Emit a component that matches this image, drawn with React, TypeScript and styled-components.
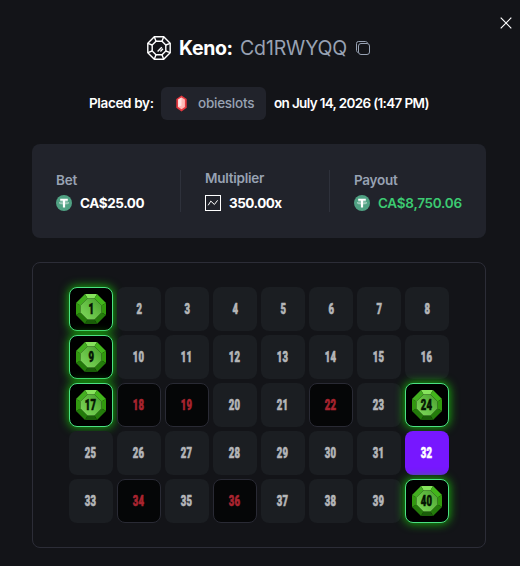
import styled, { createGlobalStyle, css } from "styled-components";

const GlobalStyle = createGlobalStyle`
  * {
    box-sizing: border-box;
  }
  body {
    margin: 0;
    background-color: #131418;
    font-family: Inter, "Liberation Sans", sans-serif;
  }
`;

const Modal = styled.div`
  position: relative;
  width: 520px;
  height: 566px;
  padding: 34px 34px 18px 32px;
  background-color: #131418;
  color: #ffffff;
  overflow: hidden;
`;

const CloseButton = styled.button`
  position: absolute;
  top: 17px;
  right: 8px;
  width: 12px;
  height: 12px;
  padding: 0;
  border: none;
  background: none;
  svg {
    display: block;
  }
`;

const Header = styled.div`
  display: flex;
  align-items: center;
  height: 28px;
  padding-left: 115px;
  font-size: 19.5px;
  white-space: nowrap;
`;

const GameName = styled.h1`
  width: 54px;
  margin: 0 7px 0 8px;
  font-size: 19.5px;
  font-weight: 700;
  letter-spacing: -0.35px;
`;

const BetId = styled.span`
  width: 107px;
  margin-right: 9px;
  color: #98a2b3;
  letter-spacing: -0.15px;
`;

const PlacedRow = styled.div`
  display: flex;
  align-items: center;
  height: 33px;
  margin-top: 25px;
  padding-left: 57px;
  font-size: 13.5px;
  font-weight: 600;
  letter-spacing: -0.35px;
  white-space: nowrap;
`;

const PlacedLabel = styled.span`
  width: 72px;
  padding-bottom: 1px;
`;

const PlacedDate = styled.span`
  padding-bottom: 1px;
  letter-spacing: -0.66px;
`;

const UserChip = styled.div`
  display: flex;
  align-items: center;
  width: 105px;
  height: 33px;
  margin-right: 8px;
  padding: 0 0 1px 13px;
  gap: 9px;
  border-radius: 6px;
  background-color: #21232b;
  color: #98a2b3;
  font-weight: 500;
  letter-spacing: -0.25px;
`;

const Stats = styled.div`
  display: grid;
  grid-template-columns: 125px 149px 1fr;
  height: 94px;
  margin-top: 24px;
  padding: 26px 0 0 24px;
  border-radius: 8px;
  background-color: #21232b;
`;

const Stat = styled.div<{ $divided?: boolean; $raised?: boolean }>`
  display: flex;
  flex-direction: column;
  height: 42px;
  padding-top: ${(p) => (p.$raised ? 0 : 2)}px;
  gap: ${(p) => (p.$raised ? 8 : 6)}px;
  border-right: ${(p) => (p.$divided ? "1px solid #2e313b" : "none")};
  & + & {
    padding-left: 24px;
  }
`;

const StatLabel = styled.span`
  height: 17px;
  color: #98a2b3;
  font-size: 13.5px;
  font-weight: 600;
  line-height: 17px;
  letter-spacing: -0.25px;
`;

const StatValue = styled.div<{ $win?: boolean; $spacing: number }>`
  display: flex;
  align-items: center;
  height: 16px;
  gap: 8px;
  color: ${(p) => (p.$win ? "#3ccb72" : "#ffffff")};
  font-size: 13.5px;
  font-weight: ${(p) => (p.$win ? 600 : 700)};
  letter-spacing: ${(p) => p.$spacing}px;
  white-space: nowrap;
  svg {
    flex: none;
  }
`;

const Board = styled.div`
  display: grid;
  grid-template-columns: repeat(8, 44px);
  grid-auto-rows: 44px;
  justify-content: center;
  gap: 4px;
  height: 286px;
  margin-top: 24px;
  padding: 24px 0;
  border: 1px solid #2c2d37;
  border-radius: 8px;
`;

type TileState = "idle" | "hit" | "drawn" | "picked";

const tileStyles = {
  idle: css`
    background-color: #1b1e22;
    color: #b5b6b8;
  `,
  hit: css`
    border: 1px solid #4be083;
    background-color: #000000;
    box-shadow: 0 0 10px 1px #18a80c;
    color: #051503;
  `,
  drawn: css`
    border: 1px solid #292a34;
    background-color: #050607;
    color: #a9242f;
  `,
  picked: css`
    background-color: #7717ff;
    color: #ffffff;
  `,
};

const Tile = styled.div<{ $state: TileState }>`
  display: grid;
  place-items: center;
  border-radius: 8px;
  ${(p) => tileStyles[p.$state]}
  > * {
    grid-area: 1 / 1;
  }
`;

const TileNumber = styled.span`
  position: relative;
  font-family: Roboto, "Liberation Sans", sans-serif;
  font-size: 14px;
  font-weight: 900;
  line-height: 16px;
  letter-spacing: 0.5px;
  -webkit-text-stroke: 0.6px currentColor;
  transform: scaleX(0.68);
`;

const KenoIcon = () => (
  <svg width="24" height="24" viewBox="0 0 24 24" fill="none" stroke="#fff" strokeWidth="1.4">
    <path d="M7.3.8h9.4l6.5 6.5v9.4l-6.5 6.5H7.3L.8 16.7V7.3z" />
    <path d="M9 5.2h6l3.8 3.8v6L15 18.8H9L5.2 15V9z" />
    <path d="M7.3.8 9 5.2M16.7.8 15 5.2M23.2 7.3 18.8 9M23.2 16.7 18.8 15M16.7 23.2 15 18.8M7.3 23.2 9 18.8M.8 16.7 5.2 15M.8 7.3 5.2 9" />
    <path d="m10.6 15.4 4.2-4.2M13.4 15.4l2.6-2.6" />
  </svg>
);

const CopyIcon = () => (
  <svg width="15" height="15" viewBox="0 0 15 15" fill="none" stroke="#98a2b3">
    <rect x="2.5" y="2.5" width="11" height="11" rx="2.5" />
    <path d="M2 11.5C1 11 .5 10.5.5 9.5v-7a2 2 0 0 1 2-2h7c1 0 1.5.5 2 1.5" />
  </svg>
);

const RankGem = () => (
  <svg width="15" height="17" viewBox="0 0 15 17">
    <path d="M7.5.5 12.7 4v8.8l-5.2 3.6-5.2-3.6V4z" fill="#e5383f" />
    <path d="m7.5 2.4 3.4 2.2v7.4l-3.4 2.2L4.1 12V4.6z" fill="#ffb9b7" />
    <path d="M7.5 2.4v8L4.1 12V4.6z" fill="#fff" opacity=".6" />
  </svg>
);

const TetherIcon = () => (
  <svg width="16" height="16" viewBox="0 0 16 16">
    <circle cx="8" cy="8" r="8" fill="#50a183" />
    <path d="M4.2 3.8h7.6v2H9.1v6.7H6.9V5.8H4.2z" fill="#fff" />
    <ellipse cx="8" cy="7.9" rx="4.7" ry="1" fill="none" stroke="#fff" strokeWidth=".6" />
  </svg>
);

const MultiplierIcon = () => (
  <svg width="16" height="16" viewBox="0 0 16 16" fill="none" stroke="#fff">
    <rect x=".5" y=".5" width="15" height="15" />
    <path d="m3.2 10.3 2.6-4.2 3.6 3.4 3.2-4.2" />
  </svg>
);

const Gem = () => (
  <svg width="30" height="30" viewBox="0 0 30 30">
    <defs>
      <linearGradient id="face" x1="0" y1="1" x2="1" y2="0">
        <stop offset="0" stopColor="#80d95d" />
        <stop offset=".55" stopColor="#62bd42" />
        <stop offset="1" stopColor="#459c2c" />
      </linearGradient>
    </defs>
    <path d="M9 0h12l-2.5 4.5h-7z" fill="#86e35c" />
    <path d="m21 0 9 9-4.5 2.5-7-7z" fill="#42b51b" />
    <path d="M30 9v12l-4.5-2.5v-7z" fill="#319a0d" />
    <path d="m30 21-9 9-2.5-4.5 7-7z" fill="#247c0b" />
    <path d="M21 30H9l2.5-4.5h7z" fill="#195d08" />
    <path d="m9 30-9-9 4.5-2.5 7 7z" fill="#237a0a" />
    <path d="M0 21V9l4.5 2.5v7z" fill="#329910" />
    <path d="m0 9 9-9 2.5 4.5-7 7z" fill="#43ae20" />
    <path d="M11.5 4.5h7l7 7v7l-7 7h-7l-7-7v-7z" fill="url(#face)" />
  </svg>
);

const numbers = Array.from({ length: 40 }, (_, i) => i + 1);
const hits = [1, 9, 17, 24, 40];
const drawn = [18, 19, 22, 34, 36];
const picked = [32];

const getState = (n: number): TileState => {
  if (hits.includes(n)) return "hit";
  if (drawn.includes(n)) return "drawn";
  if (picked.includes(n)) return "picked";
  return "idle";
};

function App() {
  return (
    <>
      <GlobalStyle />
      <Modal>
        <CloseButton aria-label="Close">
          <svg width="12" height="12" viewBox="0 0 12 12" stroke="#fff" strokeWidth="1.2">
            <path d="m.7.7 10.6 10.6M11.3.7.7 11.3" />
          </svg>
        </CloseButton>
        <Header>
          <KenoIcon />
          <GameName>Keno:</GameName>
          <BetId>Cd1RWYQQ</BetId>
          <CopyIcon />
        </Header>
        <PlacedRow>
          <PlacedLabel>Placed by:</PlacedLabel>
          <UserChip>
            <RankGem />
            <span>obieslots</span>
          </UserChip>
          <PlacedDate>on July 14, 2026 (1:47 PM)</PlacedDate>
        </PlacedRow>
        <Stats>
          <Stat $divided>
            <StatLabel>Bet</StatLabel>
            <StatValue $spacing={-0.4}>
              <TetherIcon />
              CA$25.00
            </StatValue>
          </Stat>
          <Stat $divided $raised>
            <StatLabel>Multiplier</StatLabel>
            <StatValue $spacing={-0.5}>
              <MultiplierIcon />
              350.00x
            </StatValue>
          </Stat>
          <Stat>
            <StatLabel>Payout</StatLabel>
            <StatValue $win $spacing={-0.25}>
              <TetherIcon />
              CA$8,750.06
            </StatValue>
          </Stat>
        </Stats>
        <Board>
          {numbers.map((n) => {
            const state = getState(n);
            return (
              <Tile key={n} $state={state}>
                {state === "hit" && <Gem />}
                <TileNumber>{n}</TileNumber>
              </Tile>
            );
          })}
        </Board>
      </Modal>
    </>
  );
}

export default App;
